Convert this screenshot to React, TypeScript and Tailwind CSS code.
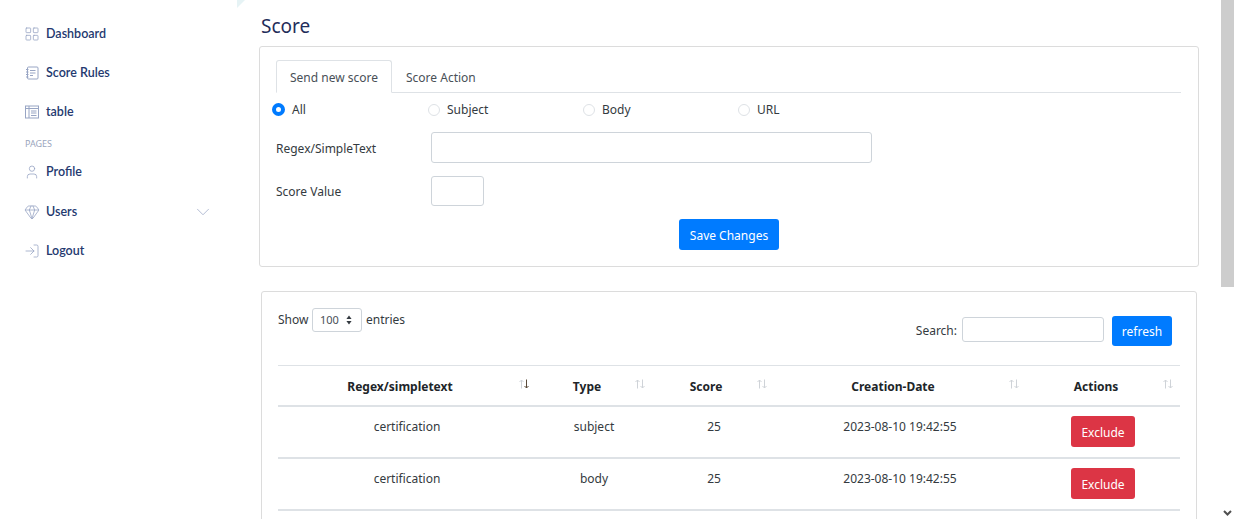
import React from 'react'
import { ChevronDown, Gem, LayoutGrid, LogIn, User } from 'lucide-react'

const iconClass = 'w-[16px] h-[16px] -ml-[1px] text-[#98a5c4]'

function NotebookIcon() {
  return (
    <svg viewBox="0 0 14 14" fill="none" stroke="currentColor" strokeWidth="1" className="w-[14px] h-[14px] text-[#98a5c4]">
      <rect x="2.5" y="1" width="10.5" height="12" rx="1" />
      <path d="M5 4.5h5.5M5 7h5.5M5 9.5h3M1 3.5h2.5M1 6h2.5M1 8.5h2.5M1 11h2.5" />
    </svg>
  )
}

function TableIcon() {
  return (
    <svg viewBox="0 0 14 14" fill="none" stroke="currentColor" strokeWidth="1" className="w-[14px] h-[14px] text-[#98a5c4]">
      <rect x="0.5" y="1" width="13" height="12" />
      <path d="M4 1v12M0.5 3.5h13M6 6h5.5M6 8h5.5M6 10.5h5.5" />
    </svg>
  )
}

function NavItem({ icon, label, className }: { icon: React.ReactNode; label: string; className: string }) {
  return (
    <div className={`flex items-center h-[20px] pl-[25px] ${className}`}>
      <span className="w-[21px] flex">{icon}</span>
      <span className="text-[12.5px] font-['Lato',sans-serif] font-semibold text-[#24396f]">{label}</span>
    </div>
  )
}

function Sidebar() {
  return (
    <aside className="w-[237px] shrink-0 relative">
      <div className="absolute top-0 right-[-8px] w-0 h-0 border-t-[8px] border-r-[8px] border-t-[#e6f3f5] border-r-transparent" />
      <div className="pt-[24px]">
        <NavItem icon={<LayoutGrid className={iconClass} strokeWidth={1.2} />} label="Dashboard" className="" />
        <NavItem icon={<NotebookIcon />} label="Score Rules" className="mt-[19px]" />
        <NavItem icon={<TableIcon />} label="table" className="mt-[19px]" />
        <div className="pl-[25px] mt-[16px] text-[9px] leading-[12px] text-[#9aa5bd]">PAGES</div>
        <NavItem icon={<User className={iconClass} strokeWidth={1.2} />} label="Profile" className="mt-[12px]" />
        <div className="relative mt-[20px]">
          <NavItem icon={<Gem className={iconClass} strokeWidth={1.2} />} label="Users" className="" />
          <ChevronDown className="absolute left-[192px] top-[-1px] w-[22px] h-[22px] text-[#98a5c4]" strokeWidth={0.8} />
        </div>
        <NavItem icon={<LogIn className={iconClass} strokeWidth={1.2} />} label="Logout" className="mt-[19px]" />
      </div>
    </aside>
  )
}

function Radio({ label, checked }: { label: string; checked?: boolean }) {
  return (
    <div className="w-[155px] flex items-center">
      {checked ? (
        <span className="w-[13px] h-[13px] rounded-full border-[4px] border-[#007bff] bg-white" />
      ) : (
        <span className="w-[12px] h-[12px] ml-[1px] rounded-full border border-[#dee2e6] bg-white" />
      )}
      <span className="ml-[7px]">{label}</span>
    </div>
  )
}

function SendScoreCard() {
  return (
    <section className="ml-[22px] mr-[22px] h-[221px] border border-[#dcdcdc] rounded-[3px] pt-[13px] pl-[12px] pr-[17px]">
      <div className="flex h-[33px] ml-[4px] border-b border-[#dee2e6]">
        <div className="h-[33px] w-[116px] pt-[3px] flex items-center justify-center border border-[#dee2e6] border-b-white rounded-t-[3px] bg-white text-[#495057]">Send new score</div>
        <div className="pl-[14px] pt-[4px] flex items-center text-[#495057]">Score Action</div>
      </div>
      <div className="flex h-[17px] mt-[8px] items-center">
        <Radio label="All" checked />
        <Radio label="Subject" />
        <Radio label="Body" />
        <Radio label="URL" />
      </div>
      <div className="flex items-center mt-[14px] ml-[4px]">
        <label className="w-[155px] pt-[2px]">Regex/SimpleText</label>
        <input className="w-[441px] h-[31px] border border-[#ced4da] rounded-[3px] bg-white" />
      </div>
      <div className="flex items-center mt-[13px] ml-[4px]">
        <label className="w-[155px] pt-[2px]">Score Value</label>
        <input className="w-[53px] h-[30px] border border-[#ced4da] rounded-[3px] bg-white" />
      </div>
      <div className="flex ml-[407px] mt-[13px]">
        <button className="w-[100px] h-[31px] pt-[2px] bg-[#007bff] text-white rounded-[3px]">Save Changes</button>
      </div>
    </section>
  )
}

function SortIcon({ active }: { active?: boolean }) {
  return (
    <svg viewBox="0 0 12 10" fill="none" strokeWidth="1" className="absolute right-[6px] top-[13px] w-[12px] h-[10px]">
      <path d="M3.5 9.5V1M1.5 3l2-2 2 2" stroke="#cfd3d8" />
      <path d="M8.5 0.5V9M6.5 7l2 2 2-2" stroke={active ? '#5a4a3a' : '#cfd3d8'} />
    </svg>
  )
}

const columns = [
  { label: 'Regex/simpletext', width: 'w-[258px]', active: true },
  { label: 'Type', width: 'w-[116px]' },
  { label: 'Score', width: 'w-[122px]' },
  { label: 'Creation-Date', width: 'w-[252px]' },
  { label: 'Actions', width: 'w-[154px]' }
]

const rows = [
  { text: 'certification', type: 'subject', score: 25, date: '2023-08-10 19:42:55' },
  { text: 'certification', type: 'body', score: 25, date: '2023-08-10 19:42:55' }
]

function ScoreTable() {
  return (
    <section className="ml-[24px] mr-[24px] mt-[24px] h-[300px] border border-[#dcdcdc] rounded-[3px] pt-[16px] px-[16px]">
      <div className="flex justify-between h-[57px]">
        <div className="flex h-[24px] items-start">
          <span className="mt-[3px] w-[34px]">Show</span>
          <div className="w-[50px] h-[24px] border border-[#ced4da] rounded-[3px] flex items-center pl-[7px] text-[11px] text-[#495057]">
            100
            <svg viewBox="0 0 6 10" className="w-[6px] h-[10px] ml-[7px]" fill="#343a40">
              <path d="M3 0.5 5.6 4H0.4zM3 9.5 0.4 6h5.2z" />
            </svg>
          </div>
          <span className="ml-[4px] mt-[3px]">entries</span>
        </div>
        <div className="flex items-center mr-[8px] h-[30px] mt-[8px]">
          <span className="-mt-[1px]">Search:</span>
          <input className="ml-[5px] -mt-[3px] w-[142px] h-[25px] border border-[#ced4da] rounded-[3px] bg-white" />
          <button className="ml-[8px] w-[60px] h-[30px] pt-[2px] bg-[#007bff] text-white rounded-[3px]">refresh</button>
        </div>
      </div>
      <table className="table-fixed w-[902px] border-collapse">
        <thead>
          <tr className="h-[40px] border-t border-[#dee2e6] border-b-[2px]">
            {columns.map((c) => (
              <th key={c.label} className={`${c.width} relative pr-[14px] pt-[4px] font-bold text-[#212529] text-center`}>
                {c.label}
                <SortIcon active={c.active} />
              </th>
            ))}
          </tr>
        </thead>
        <tbody>
          {rows.map((r) => (
            <tr key={r.type} className="h-[52px] border-b-[2px] border-[#dee2e6]">
              <td className="text-center align-top pt-[11px]">{r.text}</td>
              <td className="text-center align-top pt-[11px]">{r.type}</td>
              <td className="text-center align-top pt-[11px] pl-[2px]">{r.score}</td>
              <td className="text-center align-top pt-[11px]">{r.date}</td>
              <td className="align-top pt-[9px]">
                <button className="block mx-auto w-[64px] h-[31px] pt-[4px] bg-[#dc3545] text-white rounded-[3px]">Exclude</button>
              </td>
            </tr>
          ))}
        </tbody>
      </table>
    </section>
  )
}

function Scrollbar() {
  return (
    <div className="w-[13px] shrink-0 flex flex-col justify-between bg-white">
      <div className="h-[287px] bg-[#cdcdcd]" />
      <svg viewBox="0 0 13 13" fill="none" stroke="#505050" strokeWidth="2" className="w-[13px] h-[13px]">
        <path d="M3 5l3.5 3.5L10 5" />
      </svg>
    </div>
  )
}

export default function App() {
  return (
    <div className="flex h-[519px] w-[1234px] overflow-hidden bg-white text-[12px] leading-[18px] text-[#343a40] font-['Noto_Sans',sans-serif]">
      <Sidebar />
      <main className="flex-1 min-w-0">
        <h1 className="ml-[24px] pt-[13px] h-[46px] text-[19px] leading-[26px] font-normal text-[#1f2d5a]">Score</h1>
        <SendScoreCard />
        <ScoreTable />
      </main>
      <Scrollbar />
    </div>
  )
}
